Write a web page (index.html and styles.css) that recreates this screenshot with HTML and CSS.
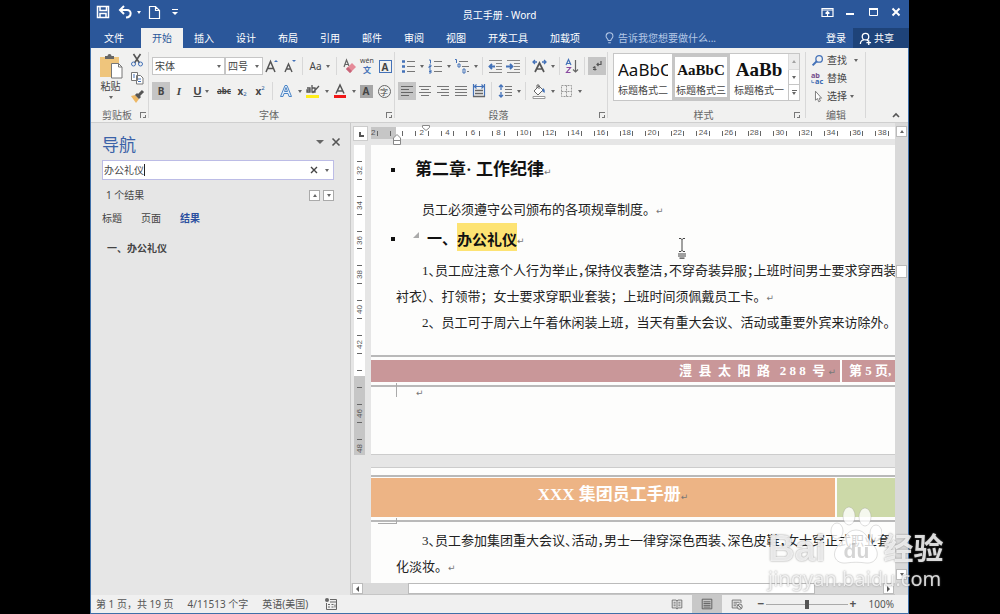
FILE: index.html
```html
<!DOCTYPE html>
<html lang="zh-CN">
<head>
    <title>员工手册 - Word</title>
    <meta charset="utf-8" />
    <meta name="viewport" content="width=device-width, initial-scale=1" />
    <link rel="stylesheet" href="styles.css">
</head>
<body>
    <div id="app">

        <header id="titlebar">
            <div class="quick-access">
                <button class="tool" aria-label="保存"><svg viewBox="0 0 16 16"><path d="M2.500 2.500h11v11h-11zM5 2.500v4h6.500v-4M5 13.500v-4h6v4" fill="none" stroke="#fff" stroke-width="1.500"/></svg></button>
                <button class="tool drop" aria-label="撤消"><svg viewBox="0 0 16 16"><path d="M7 2L3 6l4 4M3.500 6H10c5 0 5 7-1 7.500" fill="none" stroke="#fff" stroke-width="2"/></svg><i class="caret"></i></button>
                <button class="tool" aria-label="新建"><svg viewBox="0 0 16 16"><path d="M3.500 2.500h6l4 4v8h-10zM9.500 2.500v4h4" fill="none" stroke="#fff" stroke-width="1.200"/></svg></button>
                <button class="tool" aria-label="自定义快速访问工具栏"><svg viewBox="0 0 16 16"><path d="M5 5.500h6" stroke="#fff"/><path d="M5 8h6l-3 3z" fill="#fff"/></svg></button>
            </div>
            <h1>员工手册 - Word</h1>
            <div class="window-buttons">
                <button class="tool" aria-label="功能区显示选项"><svg viewBox="0 0 16 16"><path d="M3 4.500h11v8H3zM3 6h11M8.500 12V7.500M6.500 9.500l2-2 2 2" fill="none" stroke="#fff" stroke-width="1.200"/></svg></button>
                <button class="tool" aria-label="最小化"><svg viewBox="0 0 16 16"><path d="M4 10h8" stroke="#fff" stroke-width="2"/></svg></button>
                <button class="tool" aria-label="最大化"><svg viewBox="0 0 16 16"><path d="M4.500 4.500h8v7h-8z" fill="none" stroke="#fff"/><path d="M4 5h9" stroke="#fff" stroke-width="2"/></svg></button>
                <button class="tool" aria-label="关闭"><svg viewBox="0 0 16 16"><path d="M4.500 4.500l7 7M11.500 4.500l-7 7" stroke="#fff" stroke-width="2"/></svg></button>
            </div>
        </header>

        <nav id="tabs">
            <button class="tab file">文件</button>
            <button class="tab active">开始</button>
            <button class="tab">插入</button>
            <button class="tab">设计</button>
            <button class="tab">布局</button>
            <button class="tab">引用</button>
            <button class="tab">邮件</button>
            <button class="tab">审阅</button>
            <button class="tab">视图</button>
            <button class="tab">开发工具</button>
            <button class="tab">加载项</button>
            <button class="tell-me"><svg viewBox="0 0 10 14"><path d="M3.500 10C3.500 8 1 7.500 1 5a4 4 0 0 1 8 0c0 2.500-2.500 3-2.500 5zM3.500 12.500h3" fill="none" stroke="#b4c8e6" stroke-width="1.200"/></svg>告诉我您想要做什么...</button>
            <button class="sign-in">登录</button>
            <button class="share"><svg viewBox="0 0 14 14"><circle cx="7" cy="5" r="3.500" fill="none" stroke="#fff" stroke-width="1.400"/><path d="M1.500 13c0-3 2-4.500 4-4.500M8.500 8.500l2 1.500M10.500 9v5M8 11.500h5" fill="none" stroke="#fff" stroke-width="1.400"/></svg>共享</button>
        </nav>

        <section id="ribbon">
            <div class="group clipboard">
                <div class="clipboard-tools">
                    <button class="paste">
                        <svg viewBox="0 0 24 26"><path d="M1 4h19v20H1z" fill="#efc57c"/><path d="M6 6V3h2.500a2 2 0 0 1 4 0H15v3z" fill="#666"/><path d="M12.500 10.500h7l3.500 3.500v11H12.500z" fill="#fff" stroke="#777"/><path d="M19.500 10.500V14H23" fill="none" stroke="#777"/></svg>
                        粘贴
                        <i class="caret"></i>
                    </button>
                    <div class="stack">
                        <button class="tool" aria-label="剪切"><svg viewBox="0 0 16 16"><path d="M4.500 2l6 9M11.500 2l-6 9" stroke="#555" stroke-width="1.600"/><circle cx="4.500" cy="12" r="2" fill="none" stroke="#4472b8"/><circle cx="11.500" cy="12" r="2" fill="none" stroke="#4472b8"/></svg></button>
                        <button class="tool" aria-label="复制"><svg viewBox="0 0 16 16"><path d="M2.500 2.500h6v8h-6zM7.500 5.500h4l2.500 2.500v6H7.500z" fill="#fff" stroke="#777"/><path d="M4 5h2M4 7h2M9 9h3M9 11.500h3" stroke="#4472b8"/></svg></button>
                        <button class="tool" aria-label="格式刷"><svg viewBox="0 0 16 16"><path d="M2 8l4-1 4 4-3 4z" fill="#edb865"/><path d="M7 6l4 4M9 8l5-5" stroke="#555" stroke-width="3"/></svg></button>
                    </div>
                </div>
                <div class="group-label"><span>剪贴板</span><button class="launcher" aria-label="剪贴板选项"></button></div>
            </div>

            <div class="group font">
                <div class="row">
                    <label class="combo font-name"><select aria-label="字体"><option>宋体</option></select><i class="caret"></i></label>
                    <label class="combo font-size"><select aria-label="字号"><option>四号</option></select><i class="caret"></i></label>
                    <button class="tool" aria-label="增大字号"><svg viewBox="0 0 16 16"><path d="M2 14L6.500 3.500 11 14M3.500 10.500h6" fill="none" stroke="#555" stroke-width="1.500"/><path d="M10 4l2-2 2 2z" fill="#4472b8"/></svg></button>
                    <button class="tool" aria-label="减小字号"><svg viewBox="0 0 16 16"><path d="M3 14l3.500-8L10 14M4.500 11h4" fill="none" stroke="#555" stroke-width="1.400"/><path d="M10 2h4l-2 2z" fill="#4472b8"/></svg></button>
                    <i class="sep"></i>
                    <button class="tool drop">Aa<i class="caret"></i></button>
                    <i class="sep"></i>
                    <button class="tool" aria-label="清除格式"><svg viewBox="0 0 16 16"><path d="M3 9l2.500-7L8 8M4 6.500h3" fill="none" stroke="#666" stroke-width="1.200"/><path d="M5 11l6-6 4 4-6 6z" fill="#e58a98"/><path d="M5 11l2-2 4 4-2 2z" fill="#c76578"/></svg></button>
                    <button class="tool pinyin" aria-label="拼音指南"><small>wén</small><b>文</b></button>
                    <button class="tool" aria-label="字符边框"><span class="boxed">A</span></button>
                </div>
                <div class="row">
                    <button class="tool pressed"><b>B</b></button>
                    <button class="tool"><em>I</em></button>
                    <button class="tool drop"><u>U</u><i class="caret"></i></button>
                    <button class="tool strike"><s>abc</s></button>
                    <button class="tool index"><b>x</b><sub>2</sub></button>
                    <button class="tool index"><b>x</b><sup>2</sup></button>
                    <i class="sep"></i>
                    <button class="tool drop" aria-label="文本效果"><svg viewBox="0 0 16 16"><path d="M2.500 13.500L7 2.500h2l4.500 11h-2.500l-1-3H6l-1 3zM6.500 8.500h3L8 4.500z" fill="#e7f0fa" stroke="#4b85c6"/></svg><i class="caret"></i></button>
                    <button class="tool drop" aria-label="突出显示"><svg viewBox="0 0 16 16"><path d="M1 12h13v3H1z" fill="#ffee1a"/><path d="M2 5h3v4H2V7h3M7 2v7h3V5H7M7.500 10L14 3" fill="none" stroke="#555" stroke-width="1.300"/></svg><i class="caret"></i></button>
                    <button class="tool drop" aria-label="字体颜色"><svg viewBox="0 0 16 16"><path d="M2 12h12v3H2z" fill="#f01818"/><path d="M4 10.500L8 2l4 8.500M5.500 8h5" fill="none" stroke="#555" stroke-width="1.500"/></svg><i class="caret"></i></button>
                    <button class="tool"><span class="shaded">A</span></button>
                    <button class="tool"><span class="circled">字</span></button>
                </div>
                <div class="group-label"><span>字体</span><button class="launcher" aria-label="字体选项"></button></div>
            </div>

            <div class="group paragraph">
                <div class="row">
                    <button class="tool drop" aria-label="项目符号"><svg viewBox="0 0 16 16"><path d="M2 3.500h3M2 8.500h3M2 13.500h3" stroke="#4472b8" stroke-width="2.500"/><path d="M7 3.500h8M7 8.500h8M7 13.500h8" stroke="#777"/></svg><i class="caret"></i></button>
                    <button class="tool drop" aria-label="编号"><svg viewBox="0 0 16 16"><path d="M2 2h1.500v3.500M2 7h2v1.500H2V10h2M2 12h2v3H2M4 13.500H2" fill="none" stroke="#4472b8"/><path d="M7 3.500h8M7 8.500h8M7 13.500h8" stroke="#777"/></svg><i class="caret"></i></button>
                    <button class="tool drop" aria-label="多级列表"><svg viewBox="0 0 16 16"><path d="M1 1.500h1.500V5M4 6h2v3H4zM9 11h2v4H9z" fill="none" stroke="#4472b8"/><path d="M5 3.500h9M8 8.500h7M13 13.500h2" stroke="#777"/></svg><i class="caret"></i></button>
                    <i class="sep"></i>
                    <button class="tool" aria-label="减少缩进"><svg viewBox="0 0 16 16"><path d="M2 2.500h13M9 5.500h6M9 8.500h6M9 11.500h6M2 14.500h13" stroke="#888"/><path d="M8 8.500H3M5 6L2.500 8.500 5 11" fill="none" stroke="#4472b8" stroke-width="1.800"/></svg></button>
                    <button class="tool" aria-label="增加缩进"><svg viewBox="0 0 16 16"><path d="M2 2.500h13M9 5.500h6M9 8.500h6M9 11.500h6M2 14.500h13" stroke="#888"/><path d="M1 8.500h6M5 6l2.500 2.500L5 11" fill="none" stroke="#4472b8" stroke-width="1.800"/></svg></button>
                    <i class="sep"></i>
                    <button class="tool drop" aria-label="中文版式"><svg viewBox="0 0 16 16"><path d="M4 14l4.500-9L13 14M5.500 11h6" fill="none" stroke="#555" stroke-width="1.700"/><path d="M6 4H2M4 2L2 4l2 2M11 4h4M13 2l2 2-2 2" fill="none" stroke="#4472b8" stroke-width="1.300"/></svg><i class="caret"></i></button>
                    <i class="sep"></i>
                    <button class="tool" aria-label="排序"><svg viewBox="0 0 16 16"><path d="M2 7l2.500-5.500L7 7M3 5.500h3" fill="none" stroke="#4472b8" stroke-width="1.200"/><path d="M2.500 9.500h4l-4 5h4" fill="none" stroke="#8a4ba0" stroke-width="1.200"/><path d="M11.500 2v12M9 11.500l2.500 2.500 2.500-2.500" fill="none" stroke="#666" stroke-width="1.200"/></svg></button>
                    <i class="sep"></i>
                    <button class="tool pressed" aria-label="显示编辑标记"><svg viewBox="0 0 16 16"><path d="M12 3v3.500H8M9.500 5L8 6.500 9.500 8M6 8.500v4M4 10l2-1.500M4 11.500h3.500" fill="none" stroke="#555" stroke-width="1.200"/></svg></button>
                </div>
                <div class="row">
                    <button class="tool pressed" aria-label="左对齐"><svg viewBox="0 0 16 16"><path d="M2 3.500h12M2 6.500h8M2 9.500h12M2 12.500h8" stroke="#666"/></svg></button>
                    <button class="tool" aria-label="居中"><svg viewBox="0 0 16 16"><path d="M2 3.500h12M4 6.500h8M2 9.500h12M4 12.500h8" stroke="#777"/></svg></button>
                    <button class="tool" aria-label="右对齐"><svg viewBox="0 0 16 16"><path d="M2 3.500h12M6 6.500h8M2 9.500h12M6 12.500h8" stroke="#777"/></svg></button>
                    <button class="tool" aria-label="两端对齐"><svg viewBox="0 0 16 16"><path d="M2 3.500h12M2 6.500h12M2 9.500h12M2 12.500h12" stroke="#777"/></svg></button>
                    <button class="tool" aria-label="分散对齐"><svg viewBox="0 0 16 16"><path d="M2.500 1v13M13.500 1v13M3 3.500h10M5.500 1.500l-2 2 2 2M10.500 1.500l2 2-2 2" fill="none" stroke="#4472b8" stroke-width="1.200"/><path d="M4 7.500h8M4 10.500h8M2 13.500h12" stroke="#666" stroke-width="1.500"/></svg></button>
                    <i class="sep"></i>
                    <button class="tool drop" aria-label="行距"><svg viewBox="0 0 16 16"><path d="M4 2v5M2 4l2-2 2 2M4 9v5M2 12l2 2 2-2" fill="none" stroke="#4472b8" stroke-width="1.300"/><path d="M8 3.500h7M8 6.500h7M8 9.500h7M8 12.500h7" stroke="#777"/></svg><i class="caret"></i></button>
                    <i class="sep"></i>
                    <button class="tool drop" aria-label="底纹"><svg viewBox="0 0 16 16"><path d="M3 8l5-5 4 4-5 5zM6 5V2h2v4" fill="#fff" stroke="#666"/><path d="M12 5c2 1 2 3 1.500 5L11 8z" fill="#4472b8"/><path d="M2 13.500h12v2H2z" fill="#fff" stroke="#999"/></svg><i class="caret"></i></button>
                    <button class="tool drop" aria-label="边框"><svg viewBox="0 0 16 16"><path d="M3.500 2.500h10v11h-10zM8.500 2.500v11M3.500 8.500h10" fill="none" stroke="#999" stroke-dasharray="2 1"/></svg><i class="caret"></i></button>
                </div>
                <div class="group-label"><span>段落</span><button class="launcher" aria-label="段落选项"></button></div>
            </div>

            <div class="group styles">
                <div class="gallery">
                    <button class="style-item"><span class="sample sans">AaBbC</span>标题格式二</button>
                    <button class="style-item selected"><span class="sample small">AaBbC</span>标题格式三</button>
                    <button class="style-item"><span class="sample">AaBb</span>标题格式一</button>
                    <div class="gallery-scroll">
                        <button disabled aria-label="上一行"><i class="caret up"></i></button>
                        <button aria-label="下一行"><i class="caret"></i></button>
                        <button class="more" aria-label="其他"><i class="caret"></i></button>
                    </div>
                </div>
                <div class="group-label"><span>样式</span><button class="launcher" aria-label="样式选项"></button></div>
            </div>

            <div class="group editing">
                <div class="stack">
                    <button class="command"><svg viewBox="0 0 16 16"><circle cx="10" cy="6" r="4" fill="none" stroke="#4472b8" stroke-width="1.600"/><path d="M7 9l-5 5" stroke="#4472b8" stroke-width="2.500"/></svg>查找<i class="caret wide"></i></button>
                    <button class="command"><svg viewBox="0 0 16 16"><text x="0" y="7" font-size="9" font-weight="bold" fill="#76508e">ab</text><text x="5" y="15" font-size="9" font-weight="bold" fill="#3768b0">ac</text><path d="M1 10v3h3" fill="none" stroke="#4472b8"/></svg>替换</button>
                    <button class="command"><svg viewBox="0 0 16 16"><path d="M5.500 1.500v11l2.500-2 1.500 4 2-1-1.500-3.500h3z" fill="#fff" stroke="#666"/></svg>选择<i class="caret"></i></button>
                </div>
                <div class="group-label"><span>编辑</span></div>
            </div>

            <button class="tool collapse" aria-label="折叠功能区"><svg viewBox="0 0 16 16"><path d="M5 12l3-3 3 3" fill="none" stroke="#555" stroke-width="1.600"/></svg></button>
        </section>

        <main id="workspace">
            <aside id="navigation">
                <div class="nav-head">
                    <h2>导航</h2>
                    <button aria-label="任务窗格选项"><i class="caret big"></i></button>
                    <button aria-label="关闭窗格"><svg viewBox="0 0 10 10"><path d="M1.500 1.500l7 7M8.500 1.500l-7 7" stroke="#555" stroke-width="1.600"/></svg></button>
                </div>
                <div class="search">
                    <input type="text" value="办公礼仪" aria-label="搜索文档">
                    <i class="cursor"></i>
                    <button aria-label="清除搜索"><svg viewBox="0 0 10 10"><path d="M2 2l6 6M8 2l-6 6" stroke="#444" stroke-width="1.400"/></svg></button>
                    <button aria-label="搜索选项"><i class="caret"></i></button>
                </div>
                <div class="results">
                    <span>1 个结果</span>
                    <button aria-label="上一个结果"><i class="caret up"></i></button>
                    <button aria-label="下一个结果"><i class="caret"></i></button>
                </div>
                <div class="nav-tabs">
                    <button>标题</button>
                    <button>页面</button>
                    <button class="active">结果</button>
                </div>
                <a class="nav-result" href="#etiquette">一、办公礼仪</a>
            </aside>

            <div id="editor">
                <button class="tab-stop" aria-label="制表符"></button>
                <div class="ruler-h">
                    <div class="ruler-margin">2</div>
                    <div class="ruler-scale">
                        <span>2</span><span>4</span><span>6</span><span>8</span><span>10</span><span>12</span><span>14</span><span>16</span><span>18</span><span>20</span><span>22</span><span>24</span><span>26</span><span>28</span><span>30</span><span>32</span><span>34</span><span>36</span><span>38</span>
                    </div>
                    <svg class="first-indent" viewBox="0 0 8 6"><path d="M.5.5h7v2L4 5.500.5 2.500z" fill="#fff" stroke="#888"/></svg>
                    <svg class="left-indent" viewBox="0 0 8 11"><path d="M.5 4L4 .5 7.500 4v6.500h-7zM.5 6.500h7" fill="#fff" stroke="#888"/></svg>
                </div>

                <div class="ruler-v">
                    <div class="ruler-track">
                        <div class="ruler-marks">
                            <span><b>32</b></span><span><b>34</b></span><span><b>36</b></span><span><b>38</b></span><span><b>40</b></span><span><b>42</b></span><span></span><span><b>46</b></span><span><b>48</b></span>
                        </div>
                    </div>
                </div>

                <div class="pages">
                    <article class="page">
                        <h2 class="chapter">第二章· 工作纪律<i class="mark">↵</i></h2>
                        <p class="indent">员工必须遵守公司颁布的各项规章制度。<i class="mark">↵</i></p>
                        <h3 class="section" id="etiquette">一、<mark>办公礼仪</mark><i class="mark">↵</i></h3>
                        <p class="indent compressed">1、员工应注意个人行为举止，保持仪表整洁，不穿奇装异服；上班时间男士要求穿西装</p>
                        <p>衬衣）、打领带；女士要求穿职业套装；上班时间须佩戴员工卡。<i class="mark">↵</i></p>
                        <p class="indent">2、员工可于周六上午着休闲装上班，当天有重大会议、活动或重要外宾来访除外。<i class="mark">↵</i></p>
                        <footer class="band">
                            <div class="address">澧  县  太  阳  路   2 8 8  号 <i class="mark">↵</i></div>
                            <div class="page-number">第 5 页,</div>
                        </footer>
                        <div class="footer-end"><i class="mark">↵</i></div>
                        <svg class="ibeam" viewBox="0 0 10 21"><path d="M2 .5h2l1 1 1-1h2M5 1v12M2 13.500h2l1-1 1 1h2" fill="none" stroke="#444"/><path d="M1 16h8M1 18h8M2.500 20.200h5" stroke="#444" stroke-width="1.200"/></svg>
                    </article>

                    <article class="page next">
                        <header class="band">
                            <div class="book-title">XXX 集团员工手册<i class="mark">↵</i></div>
                            <div class="logo-cell"></div>
                        </header>
                        <div class="header-end"></div>
                        <p class="indent compressed">3、员工参加集团重大会议、活动，男士一律穿深色西装、深色皮鞋，女士穿正式职业套</p>
                        <p>化淡妆。<i class="mark">↵</i></p>
                    </article>
                </div>

                <div class="scroll-v">
                    <button aria-label="向上滚动"><i class="caret up"></i></button>
                    <div class="thumb"></div>
                    <button aria-label="向下滚动"><i class="caret"></i></button>
                </div>

                <div class="scroll-h">
                    <button aria-label="向左滚动"><i class="caret left"></i></button>
                    <div class="thumb"></div>
                    <button aria-label="向右滚动"><i class="caret right"></i></button>
                </div>
            </div>
        </main>

        <footer id="status">
            <span>第 1 页，共 19 页</span>
            <span>4/11513 个字</span>
            <span>英语(美国)</span>
            <button class="tool" aria-label="宏"><svg viewBox="0 0 16 16"><path d="M3.500 7v6.500h10v-10H7M7 6h6M5 8.500h2M8.500 8.500h2M5 11h2M8.500 11h2M12 8.500v3" fill="none" stroke="#666"/><circle cx="4" cy="4" r="2" fill="#666"/></svg></button>
            <div class="views">
                <button aria-label="阅读视图"><svg viewBox="0 0 16 16"><path d="M8 4v10M2.500 3.500H7l1 1 1-1h4.500v9H9l-1 1-1-1H2.500zM4 6h2.500M4 8h2.500M4 10h2.500M9.500 6H12M9.500 8H12M9.500 10H12" fill="none" stroke="#666"/></svg></button>
                <button class="active" aria-label="页面视图"><svg viewBox="0 0 16 16"><path d="M2.500 2.500h11v11h-11zM4 5.500h8M4 7.500h8M4 9.500h8M4 11.500h8" fill="none" stroke="#555"/></svg></button>
                <button aria-label="Web 版式视图"><svg viewBox="0 0 16 16"><path d="M8 12.500H2.500v-9h10V7M4 6h7M4 8h4M4 10h3" fill="none" stroke="#666"/><circle cx="11" cy="11" r="3" fill="#ddd" stroke="#666"/><path d="M9 9l4 4" stroke="#666"/></svg></button>
            </div>
            <div class="zoom">
                <button aria-label="缩小">−</button>
                <input type="range" min="0" max="100" value="50" aria-label="缩放">
                <button aria-label="放大">+</button>
                <span>100%</span>
            </div>
        </footer>
    </div>

    <div id="watermark">
        <div class="brand">
            <span>Bai</span>
            <span class="paw">
                <svg viewBox="0 0 52 60"><ellipse cx="7" cy="25" rx="6" ry="8"/><ellipse cx="19" cy="10" rx="6" ry="9"/><ellipse cx="35" cy="11" rx="6" ry="9"/><ellipse cx="46" cy="27" rx="6" ry="8"/><path d="M26 24c10 0 12 10 18 16 7 8 2 18-8 17-7-1-13-1-20 0-11 1-15-9-8-17 6-6 8-16 18-16z"/></svg>
                <b>du</b>
            </span>
            <span class="cn">经验</span>
        </div>
        <div class="address">jingyan.baidu.com</div>
    </div>
</body>
</html>
```

FILE: styles.css
```css
html { box-sizing: border-box; }
*, *:before, *:after { box-sizing: inherit; }

body, h1, h2, h3, p { margin: 0; padding: 0; font-weight: normal; }

body {
    background: #000;
    color: #444;
    font-family: "Noto Sans", "Noto Sans CJK SC", sans-serif;
    font-size: 10px;
    line-height: 14px;
    overflow: hidden;
}

button, input, select {
    margin: 0;
    padding: 0;
    border: 0;
    background: none;
    color: inherit;
    font: inherit;
    white-space: nowrap;
}

svg { display: block; flex: none; }
a { color: inherit; text-decoration: none; }

#app {
    display: flex;
    flex-direction: column;
    height: 100vh;
    margin: 0 91px 0 90px;
    border: 1px solid #3f6fa8;
    border-top: 0;
    background: #e6e6e6;
}

/* Shared controls */
.caret {
    flex: none;
    width: 0;
    height: 0;
    border: 2px solid transparent;
    border-top: 3px solid #666;
    border-bottom: 0;
}
.caret.up { border-top: 0; border-bottom: 3px solid #666; }
.caret.left { border: 3px solid transparent; border-right-color: #555; border-left: 0; }
.caret.right { border: 3px solid transparent; border-left-color: #555; border-right: 0; }
.caret.big { border-width: 4px 4px 0; }

.tool {
    display: flex;
    align-items: center;
    justify-content: center;
    flex: none;
    width: 18px;
    height: 18px;
}
.tool svg { width: 16px; height: 16px; }
.tool.drop { width: 27px; gap: 4px; }
.pressed { background: #c5c5c5; }

.sep {
    flex: none;
    width: 1px;
    height: 18px;
    margin: 0 3px;
    background: #d8d8d8;
}

/* Title bar and tabs */
#titlebar {
    display: grid;
    grid-template-columns: 1fr auto 1fr;
    flex: none;
    height: 28px;
    margin: 0 -1px;
    padding: 0 4px;
    background: #2b579a;
    color: #fff;
}
#titlebar .caret { border-top-color: #fff; }
#titlebar h1 { font-size: 10px; line-height: 30px; }
.quick-access, .window-buttons { display: flex; align-items: center; height: 24px; }
.quick-access { gap: 3px; }
.window-buttons { justify-content: flex-end; gap: 5px; }

#tabs {
    display: flex;
    flex: none;
    height: 20px;
    margin: 0 -1px;
    background: #2b579a;
    color: #fff;
}
.tab { padding: 0 11px; line-height: 18px; }
.tab.file { width: 51px; padding-right: 14px; }
.tab.active { background: #f1f1f0; color: #2b579a; }
.tell-me { display: flex; align-items: center; gap: 4px; margin-left: 14px; color: #b4c8e6; }
.tell-me svg { width: 9px; height: 12px; }
.sign-in { margin-left: auto; padding: 0 7px; }
.share { display: flex; align-items: center; gap: 2px; width: 56px; padding-left: 6px; background: #1e4379; }
.share svg { width: 13px; height: 13px; }

/* Ribbon */
#ribbon {
    display: flex;
    flex: none;
    height: 75px;
    background: #f1f1f0;
    border-bottom: 1px solid #cfcfcf;
}
.group {
    position: relative;
    display: flex;
    flex-direction: column;
    flex: none;
    gap: 7px;
    padding: 9px 3px 0;
}
.group:after {
    content: '';
    position: absolute;
    top: 4px;
    right: 0;
    bottom: 4px;
    width: 1px;
    background: #d8d8d8;
}
.row { display: flex; align-items: center; height: 18px; }
.stack { display: flex; flex-direction: column; }
.group-label { display: flex; align-items: center; margin-top: auto; color: #666; }
.group-label span { flex: 1; text-align: center; }

.launcher {
    position: relative;
    width: 6px;
    height: 6px;
    border-top: 1px solid #777;
    border-left: 1px solid #777;
}
.launcher:after {
    content: '';
    position: absolute;
    right: 0;
    bottom: 0;
    width: 3px;
    height: 3px;
    border-right: 1px solid #777;
    border-bottom: 1px solid #777;
}

.clipboard { width: 58px; padding-top: 3px; gap: 0; }
.clipboard-tools { display: flex; gap: 1px; }
.paste { display: flex; flex-direction: column; align-items: center; width: 34px; }
.paste svg { width: 24px; height: 26px; margin-top: 2px; }
.paste .caret { margin-top: 3px; }

.font { width: 246px; }
.combo { position: relative; flex: none; height: 18px; }
.combo select {
    width: 100%;
    height: 18px;
    padding: 0 2px;
    appearance: none;
    background: #fff;
    border: 1px solid #c6c6c6;
}
.combo .caret { position: absolute; top: 8px; right: 4px; }
.font-name { width: 73px; }
.font-size { width: 38px; }
.tool em, .tool u { font: italic bold 11px "Liberation Serif", serif; }
.tool u { font: bold 11px "Liberation Sans", sans-serif; }
.strike { font-size: 8px; font-weight: bold; }
.index sub, .index sup { font-size: 6px; line-height: 6px; color: #2b579a; }
.index sub { align-self: flex-end; margin-bottom: 3px; }
.index sup { align-self: flex-start; margin-top: 3px; }
.pinyin { flex-direction: column; }
.pinyin small { font-size: 7px; line-height: 8px; }
.pinyin b { font-size: 8px; line-height: 10px; color: #4472b8; }
.boxed, .shaded, .circled { width: 13px; height: 13px; font-weight: bold; line-height: 12px; }
.boxed { border: 1px solid #4472b8; }
.shaded { background: #a6a6a6; }
.circled { border: 1px solid #666; border-radius: 50%; font-size: 8px; font-weight: normal; line-height: 11px; }

.paragraph { width: 213px; }

.styles { width: 198px; padding: 5px 6px 0 5px; }
.gallery { display: flex; height: 48px; border: 1px solid #c6c6c6; background: #fff; }
.style-item {
    flex: 1;
    min-width: 0;
    overflow: hidden;
    border: 3px solid transparent;
    text-align: center;
}
.style-item.selected { border-color: #c6c6c6; }
.sample {
    display: block;
    margin: 0 1px;
    overflow: hidden;
    font: bold 19px/26px "Liberation Serif", serif;
    color: #111;
}
.sample.sans { font: 17px/26px "Noto Sans", sans-serif; text-align: left; }
.sample.small { font-size: 15px; }
.gallery-scroll { display: flex; flex-direction: column; width: 11px; }
.gallery-scroll button {
    display: flex;
    flex: 1;
    flex-direction: column;
    align-items: center;
    justify-content: center;
    gap: 1px;
    border-left: 1px solid #c6c6c6;
    border-bottom: 1px solid #c6c6c6;
}
.gallery-scroll button:last-child { border-bottom: 0; }
.gallery-scroll button:disabled { background: #e1e1e1; opacity: 0.6; }
.more:before { content: ''; width: 5px; height: 1px; background: #666; }

.editing { width: 60px; padding-top: 3px; gap: 0; }
.command { display: flex; align-items: center; gap: 3px; height: 18px; padding-left: 2px; }
.command svg { width: 13px; height: 13px; }
.caret.wide { margin-left: 4px; }
.collapse { align-self: flex-end; margin: 0 3px 0 auto; }

/* Navigation pane */
#workspace { display: flex; flex: 1; min-height: 0; }
#navigation {
    flex: none;
    width: 260px;
    padding: 12px 16px 0 11px;
    border-right: 1px solid #c9c9c9;
}
.nav-head { display: flex; align-items: center; gap: 4px; height: 20px; margin: 0 -8px 5px 0; }
.nav-head h2 { flex: 1; color: #3a62a8; font-size: 17px; line-height: 20px; }
.nav-head button { display: flex; justify-content: center; width: 12px; padding-bottom: 6px; }
.nav-head svg, .search svg { width: 10px; height: 10px; }
.search {
    position: relative;
    display: flex;
    align-items: center;
    height: 20px;
    background: #fff;
    border: 1px solid #bcbce6;
}
.search input { flex: 1; min-width: 0; padding: 0 1px; outline: 0; }
.search button { display: flex; justify-content: center; width: 13px; }
.search .cursor { position: absolute; top: 3px; left: 41px; width: 1px; height: 12px; background: #222; }
.results { display: flex; align-items: center; gap: 3px; height: 14px; margin-top: 8px; padding-left: 4px; }
.results span { flex: 1; }
.results button {
    display: flex;
    align-items: center;
    justify-content: center;
    width: 11px;
    height: 11px;
    background: #fff;
    border: 1px solid #aaa;
}
.nav-tabs { display: flex; gap: 19px; margin-top: 9px; }
.nav-tabs .active { color: #2b4fa0; font-weight: bold; }
.nav-result { display: block; margin-top: 16px; padding-left: 5px; font-weight: bold; }

/* Rulers */
#editor {
    display: grid;
    grid-template: 22px minmax(0, 1fr) 12px / 20px minmax(0, 1fr) 13px;
    flex: 1;
    min-width: 0;
}
.tab-stop { position: relative; width: 15px; height: 15px; margin: 3px 0 0 2px; background: #fff; border: 1px solid #ccc; }
.tab-stop:after {
    content: '';
    position: absolute;
    top: 5px;
    left: 5px;
    width: 5px;
    height: 5px;
    border-left: 2px solid #555;
    border-bottom: 2px solid #555;
}
.ruler-h {
    position: relative;
    display: flex;
    min-width: 0;
    padding: 4px 0 6px;
    font: 8px/12px "Liberation Sans", sans-serif;
    color: #555;
}
.ruler-margin { width: 25px; background: linear-gradient(#666, #666) 6px 4px / 1px 5px no-repeat, linear-gradient(#666, #666) 19px 4px / 1px 5px no-repeat #c6c6c6; }
.ruler-scale {
    display: flex;
    flex: 1;
    min-width: 0;
    padding-left: 13px;
    background: linear-gradient(#666, #666) 6px 4px / 1px 5px no-repeat #fff;
}
.ruler-scale span { display: flex; flex: 1 0 0; align-items: center; justify-content: space-between; padding: 0 6px; }
.ruler-scale span:before, .ruler-scale span:after { content: ''; width: 1px; height: 5px; background: #666; }
.first-indent { position: absolute; top: 2px; left: 51px; width: 8px; height: 6px; }
.left-indent { position: absolute; top: 11px; left: 22px; width: 8px; height: 11px; }

.ruler-v { padding-left: 3px; }
.ruler-track {
    width: 11px;
    height: 310px;
    padding-top: 8px;
    overflow: hidden;
    background: linear-gradient(#fff 231px, #c6c6c6 231px);
}
.ruler-marks { display: flex; flex-direction: column; height: 313px; font: 8px/11px "Liberation Sans", sans-serif; color: #555; }
.ruler-marks span { display: flex; flex: 1 0 0; flex-direction: column; align-items: center; justify-content: space-between; padding: 8px 0; }
.ruler-marks span:before, .ruler-marks span:after { content: ''; width: 5px; height: 1px; background: #666; }
.ruler-marks b { font-weight: normal; writing-mode: vertical-rl; transform: rotate(180deg); }

/* Document */
.pages {
    display: flex;
    flex-direction: column;
    gap: 12px;
    min-width: 0;
    overflow: hidden;
    color: #222;
    font-family: "Liberation Serif", "Noto Sans CJK SC", serif;
    font-size: 13px;
    line-height: 26px;
    white-space: nowrap;
}
.page {
    position: relative;
    flex: none;
    padding-top: 9px;
    background: #fdfdfc;
    border-bottom: 1px solid #ccc;
}
.page.next { flex: 1; border-top: 1px solid #ccc; border-bottom: 0; padding-top: 7px; }
.page p { padding-left: 25px; }
.page p.indent { padding-left: 51px; }
/* half-width punctuation */
.compressed { font-feature-settings: "halt"; }
.mark { font: 9px "DejaVu Sans", sans-serif; color: #777; }
.chapter, .section { position: relative; font-weight: bold; color: #111; }
.chapter { margin-bottom: 11px; padding-left: 44px; font-size: 17px; line-height: 32px; }
.section { margin: 0 0 3px; padding-left: 56px; font-size: 15px; line-height: 32px; }
.section mark { display: inline-block; height: 28px; line-height: 34px; vertical-align: top; background: #fde373; color: inherit; }
.chapter:before, .section:before { content: ''; position: absolute; top: 14px; left: 20px; width: 4px; height: 4px; background: #111; }
.section:after {
    content: '';
    position: absolute;
    top: 9px;
    left: 42px;
    border-left: 6px solid transparent;
    border-bottom: 6px solid #aaa;
}

.band {
    display: flex;
    gap: 2px;
    padding: 3px 0;
    border-top: 2px solid #b9b9b9;
    border-bottom: 2px solid #b9b9b9;
    color: #fff;
    font-weight: bold;
    white-space: pre;
}
footer.band { margin-top: 19px; line-height: 22px; }
.band .address { flex: 1; padding-right: 4px; background: #c99799; text-align: right; }
.page-number { width: 53px; padding-left: 7px; overflow: hidden; background: #c99799; }
.footer-end { height: 67px; padding-left: 45px; line-height: 10px; }
.footer-end:before, .header-end:before {
    content: '';
    position: absolute;
    left: 25px;
    width: 1px;
    height: 14px;
    margin-top: -4px;
    background: #aaa;
}
header.band { padding: 1px 0 3px; font-size: 17px; line-height: 34px; }
.book-title { flex: 1; height: 39px; padding-left: 20px; background: #edb485; text-align: center; }
.logo-cell { width: 58px; background: #ccd9a8; }
.header-end { height: 6px; }
.header-end:before { left: 7px; width: 19px; height: 6px; background: none; border: solid #aaa; border-width: 0 1px 1px 0; }
.ibeam { position: absolute; top: 93px; left: 306px; width: 10px; height: 21px; }

/* Scroll bars */
.scroll-v, .scroll-h { display: flex; background: #d9d9d9; }
.scroll-v { grid-area: 1 / 3 / 4 / 4; flex-direction: column; padding: 3px 1px 15px; }
.scroll-h { grid-area: 3 / 1 / 4 / 3; padding: 0 1px; border-bottom: 1px solid #c6c6c6; }
.scroll-v button, .scroll-h button {
    display: flex;
    align-items: center;
    justify-content: center;
    width: 11px;
    height: 11px;
    background: #fff;
    border: 1px solid #bbb;
}
.scroll-v .thumb { height: 13px; margin: 128px 0 auto; background: #fff; border: 1px solid #bbb; }
.scroll-h .thumb { flex: 1; margin: 0 68px 0 45px; background: #fff; border: 1px solid #bbb; }

/* Status bar */
#status {
    display: flex;
    align-items: center;
    flex: none;
    gap: 14px;
    height: 18px;
    padding: 0 14px 0 5px;
    background: #f0f0f0;
    color: #555;
}
.views { display: flex; margin: 0 -10px 0 auto; }
.views button { display: flex; align-items: center; justify-content: center; width: 30px; height: 18px; }
.views svg { width: 14px; height: 14px; }
.views .active { background: #c8c8c8; }
.zoom { display: flex; align-items: center; }
.zoom button { width: 10px; font-size: 12px; font-weight: bold; }
.zoom span { width: 30px; margin-left: 6px; text-align: right; }
.zoom input { width: 82px; height: 12px; margin: 0; appearance: none; background: linear-gradient(#aaa, #aaa) 0 6px / 100% 1px no-repeat; }
.zoom input::-webkit-slider-thumb { appearance: none; width: 4px; height: 9px; background: #555; }

#watermark {
    position: fixed;
    right: 54px;
    bottom: 22px;
    width: 178px;
    color: rgba(255, 255, 255, 0.8);
    text-shadow: 0 0 2px rgba(110, 110, 110, 0.8);
    pointer-events: none;
}
.brand { display: flex; align-items: flex-end; height: 60px; font: bold 37px/34px "Liberation Sans", "Noto Sans CJK SC", sans-serif; }
.paw { position: relative; width: 52px; height: 60px; margin: 0 2px 0 4px; }
.paw svg { width: 52px; height: 60px; fill: rgba(255, 255, 255, 0.8); stroke: rgba(150, 150, 150, 0.3); }
.paw b { position: absolute; bottom: 2px; left: 14px; color: rgba(150, 150, 150, 0.4); font-size: 21px; line-height: 26px; text-shadow: none; }
.brand .cn { font-size: 30px; }
#watermark .address { font: 20px/26px "Noto Sans", sans-serif; }
```
